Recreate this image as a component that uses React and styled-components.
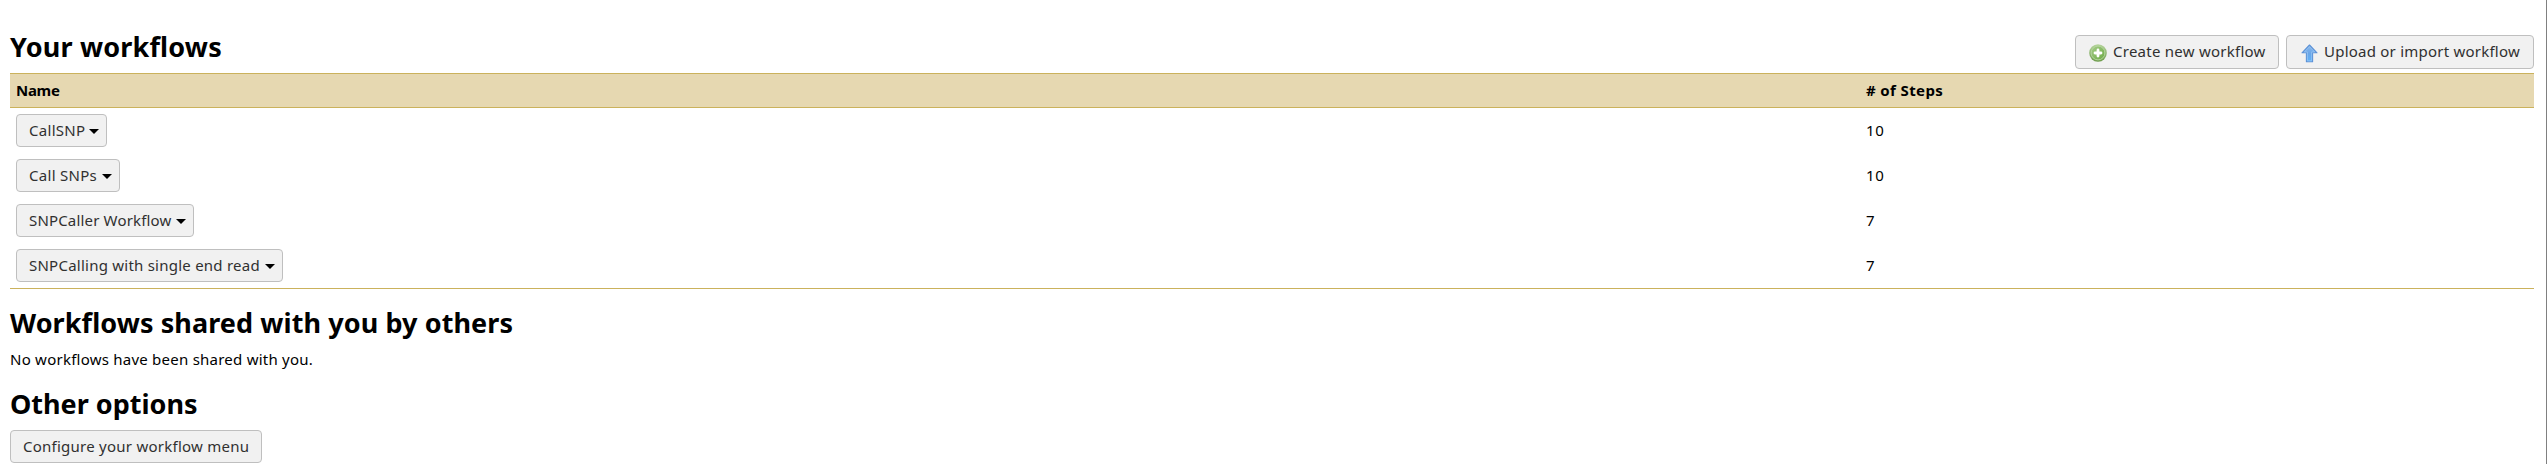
import React from 'react';
import styled, { createGlobalStyle } from 'styled-components';

const GlobalStyle = createGlobalStyle`
  * { box-sizing: border-box; }
  body {
    margin: 0;
    background: #fff;
    color: #000;
    font: 15px/20px "Noto Sans", "Open Sans", sans-serif;
  }
`;

const Page = styled.main`
  min-height: 464px;
  height: 100vh;
  padding: 0 12px 0 10px;
  border-right: 1px solid #808080;
  overflow: hidden;
`;

const TopBar = styled.header`
  display: flex;
  justify-content: space-between;
  align-items: flex-end;
  height: 73px;
`;

const Heading = styled.h2`
  margin: 0;
  font-size: 27px;
  line-height: 36px;
  font-weight: 700;
  white-space: nowrap;
  letter-spacing: ${(p) => p.$tracking || 0}px;
`;

const TitleHeading = styled(Heading)`
  margin-bottom: 8px;
`;

const SharedHeading = styled(Heading)`
  margin-top: 16px;
`;

const OptionsHeading = styled(Heading)`
  margin-top: 17px;
`;

const Actions = styled.div`
  display: flex;
  gap: 7px;
  margin-bottom: 4px;
`;

const Button = styled.button`
  display: flex;
  align-items: center;
  width: ${(p) => p.$width}px;
  height: 33px;
  margin: 0;
  padding: 0 7px 1px 12px;
  border: 1px solid #bfbfbf;
  border-radius: 4px;
  background: #f1f1f1;
  color: #303030;
  font: inherit;
  letter-spacing: ${(p) => p.$tracking || 0}px;
  white-space: nowrap;
  text-align: left;
`;

const ActionButton = styled(Button)`
  height: 34px;
  padding: 0 0 2px 13px;

  svg {
    flex: none;
    margin: 4px 6px 0 0;
  }
`;

const UploadButton = styled(ActionButton)`
  padding-left: 14px;
`;

const Caret = styled.span`
  margin: 2px 0 0 auto;
  border: solid transparent;
  border-width: 5px 5px 0;
  border-top-color: #000;
`;

const Table = styled.section`
  border-bottom: 1px solid #cbb25c;
`;

const Row = styled.div`
  display: grid;
  grid-template-columns: 1850px 1fr;
  align-items: center;
  height: 45px;
  padding-left: 6px;
`;

const HeaderRow = styled(Row)`
  height: 35px;
  border: solid #cbb25c;
  border-width: 1px 0;
  background: #e6d8b1;
  font-weight: 700;
`;

const Label = styled.span`
  margin-bottom: 1px;
  letter-spacing: ${(p) => p.$tracking || 0}px;
`;

const Message = styled.p`
  margin: 8px 0 0;
  line-height: 20px;
  letter-spacing: 0.24px;
`;

const ConfigureButton = styled(Button)`
  margin-top: 8px;
`;

const workflows = [
  { name: 'CallSNP', steps: 10, width: 91, tracking: 0.3 },
  { name: 'Call SNPs', steps: 10, width: 104, tracking: 0.29 },
  { name: 'SNPCaller Workflow', steps: 7, width: 178, tracking: 0.17 },
  { name: 'SNPCalling with single end read', steps: 7, width: 267, tracking: 0.24 },
];

function PlusIcon() {
  return (
    <svg width="18" height="18" viewBox="0 0 18 18">
      <defs>
        <linearGradient id="ring" x1="0" y1="0" x2="0" y2="1">
          <stop offset="0" stopColor="#b5d49b" />
          <stop offset="1" stopColor="#6d9c4c" />
        </linearGradient>
        <linearGradient id="disc" x1="0" y1="0" x2="1" y2="1">
          <stop offset="0" stopColor="#a5cc89" />
          <stop offset="1" stopColor="#6caa43" />
        </linearGradient>
      </defs>
      <circle cx="9" cy="9" r="8.8" fill="url(#ring)" />
      <circle cx="9" cy="9" r="6.9" fill="url(#disc)" stroke="#b8d7a3" strokeWidth="0.9" />
      <path d="M9 6v6M6 9h6" stroke="#fff" strokeWidth="2.8" strokeLinecap="round" />
    </svg>
  );
}

function UploadIcon() {
  return (
    <svg width="17" height="19" viewBox="0 0 17 19">
      <defs>
        <linearGradient id="arrow" x1="0" y1="0" x2="0" y2="1">
          <stop offset="0" stopColor="#8db9ea" />
          <stop offset="0.5" stopColor="#6aa6e8" />
          <stop offset="1" stopColor="#5cb2fb" />
        </linearGradient>
      </defs>
      <path
        d="M8.5 1L16 8.8H11.6V17.8H5.4V8.8H1Z"
        fill="url(#arrow)"
        stroke="#5c91d6"
        strokeWidth="1.1"
        strokeLinejoin="round"
      />
      <path d="M8.5 2.8L13.6 7.9H10.6V16.8H6.4V7.9H3.4Z" fill="none" stroke="#9cc8f5" strokeWidth="0.7" />
    </svg>
  );
}

export default function App() {
  return (
    <>
      <GlobalStyle />
      <Page>
        <TopBar>
          <TitleHeading as="h1" $tracking={0.18}>Your workflows</TitleHeading>
          <Actions>
            <ActionButton $width={204} $tracking={0.25}>
              <PlusIcon />
              Create new workflow
            </ActionButton>
            <UploadButton $width={248} $tracking={0.23}>
              <UploadIcon />
              Upload or import workflow
            </UploadButton>
          </Actions>
        </TopBar>
        <Table>
          <HeaderRow>
            <Label $tracking={-0.3}>Name</Label>
            <Label $tracking={0.38}># of Steps</Label>
          </HeaderRow>
          {workflows.map((w) => (
            <Row key={w.name}>
              <Button $width={w.width} $tracking={w.tracking}>
                {w.name}
                <Caret />
              </Button>
              <Label $tracking={0.6}>{w.steps}</Label>
            </Row>
          ))}
        </Table>
        <SharedHeading $tracking={0.09}>Workflows shared with you by others</SharedHeading>
        <Message>No workflows have been shared with you.</Message>
        <OptionsHeading>Other options</OptionsHeading>
        <ConfigureButton $width={252} $tracking={0.25}>Configure your workflow menu</ConfigureButton>
      </Page>
    </>
  );
}
